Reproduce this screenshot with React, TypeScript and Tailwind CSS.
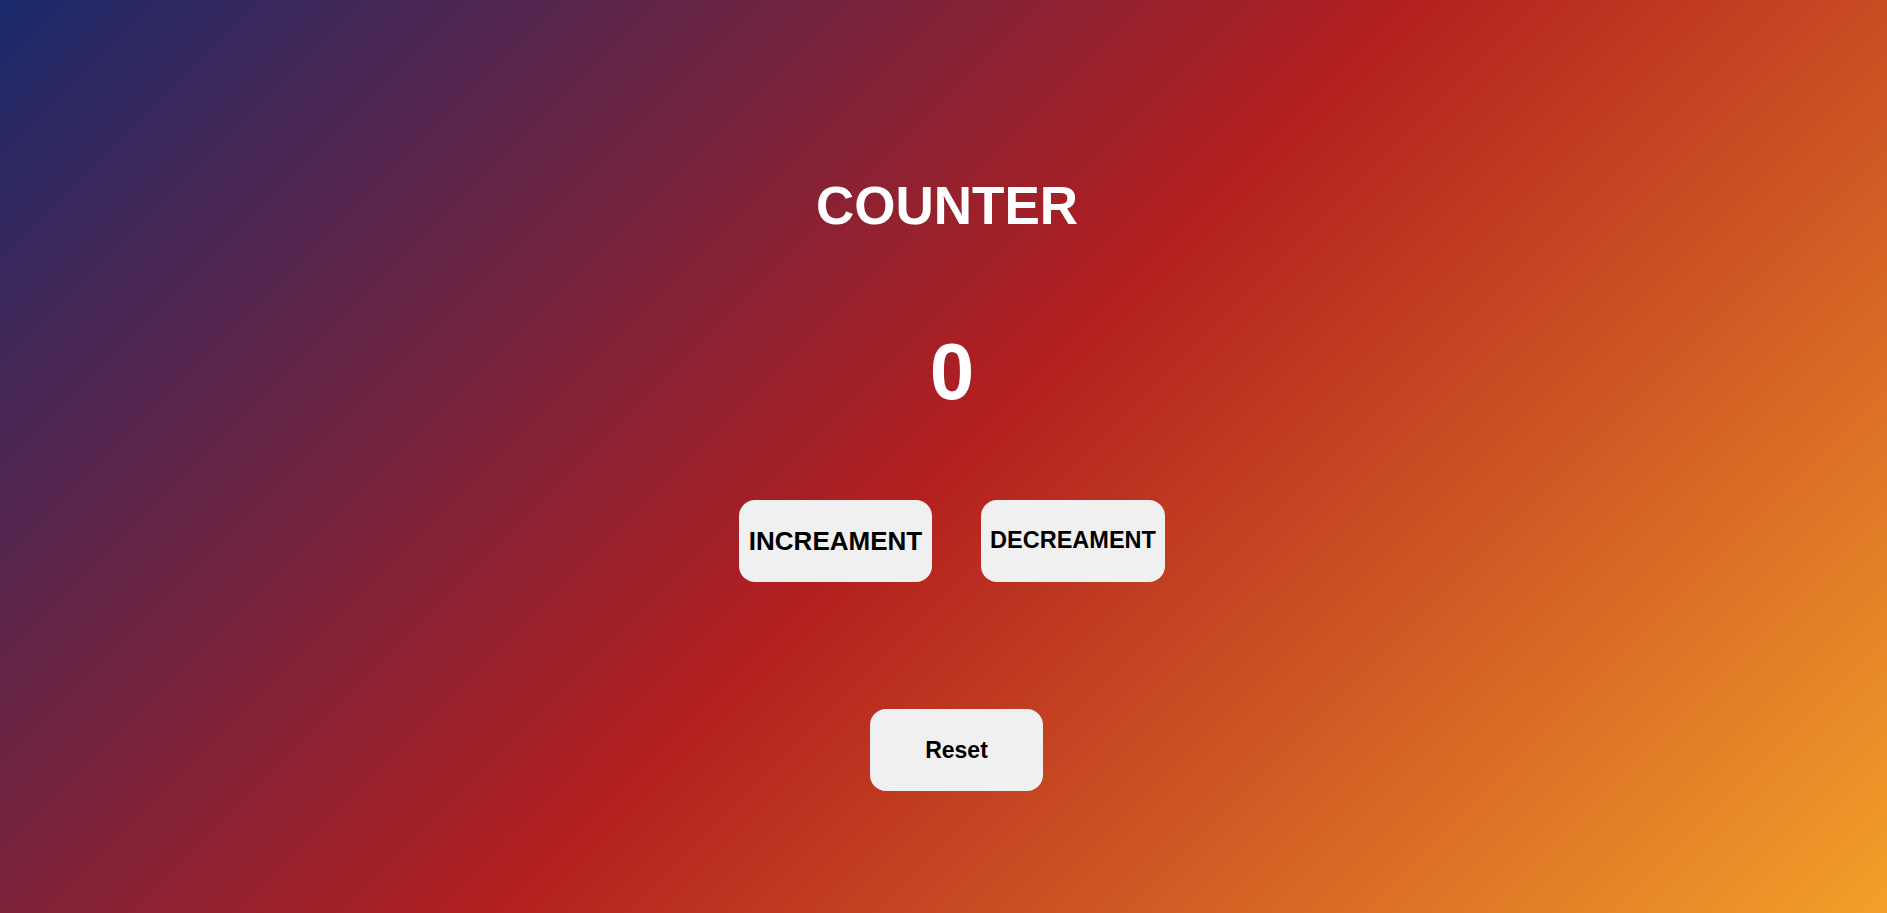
import { useState } from "react";

export default function App() {
  const [count, setCount] = useState(0);

  return (
    <div className="min-h-screen w-full flex flex-col items-center bg-[linear-gradient(135deg,#1a2a6c_0%,#b21f1f_50%,#f3a02a_100%)] font-['Liberation_Sans',Arial,sans-serif] text-white">
      <h1 className="mt-[179px] ml-[7px] text-[53px] leading-none font-bold">
        COUNTER
      </h1>

      <div className="mt-[100px] ml-[17px] text-[80px] leading-none font-bold">
        {count}
      </div>

      <div className="mt-[88px] ml-[17px] flex gap-[49px]">
        <button
          onClick={() => setCount(count + 1)}
          className="w-[193px] h-[82px] rounded-2xl bg-[#f0f0f0] text-black text-[26px] font-bold"
        >
          INCREAMENT
        </button>
        <button
          onClick={() => setCount(count - 1)}
          className="w-[184px] h-[82px] rounded-2xl bg-[#f0f0f0] text-black text-[23.5px] font-bold"
        >
          DECREAMENT
        </button>
      </div>

      <button
        onClick={() => setCount(0)}
        className="mt-[127px] ml-[26px] w-[173px] h-[82px] rounded-2xl bg-[#f0f0f0] text-black text-[23px] font-bold"
      >
        Reset
      </button>
    </div>
  );
}
